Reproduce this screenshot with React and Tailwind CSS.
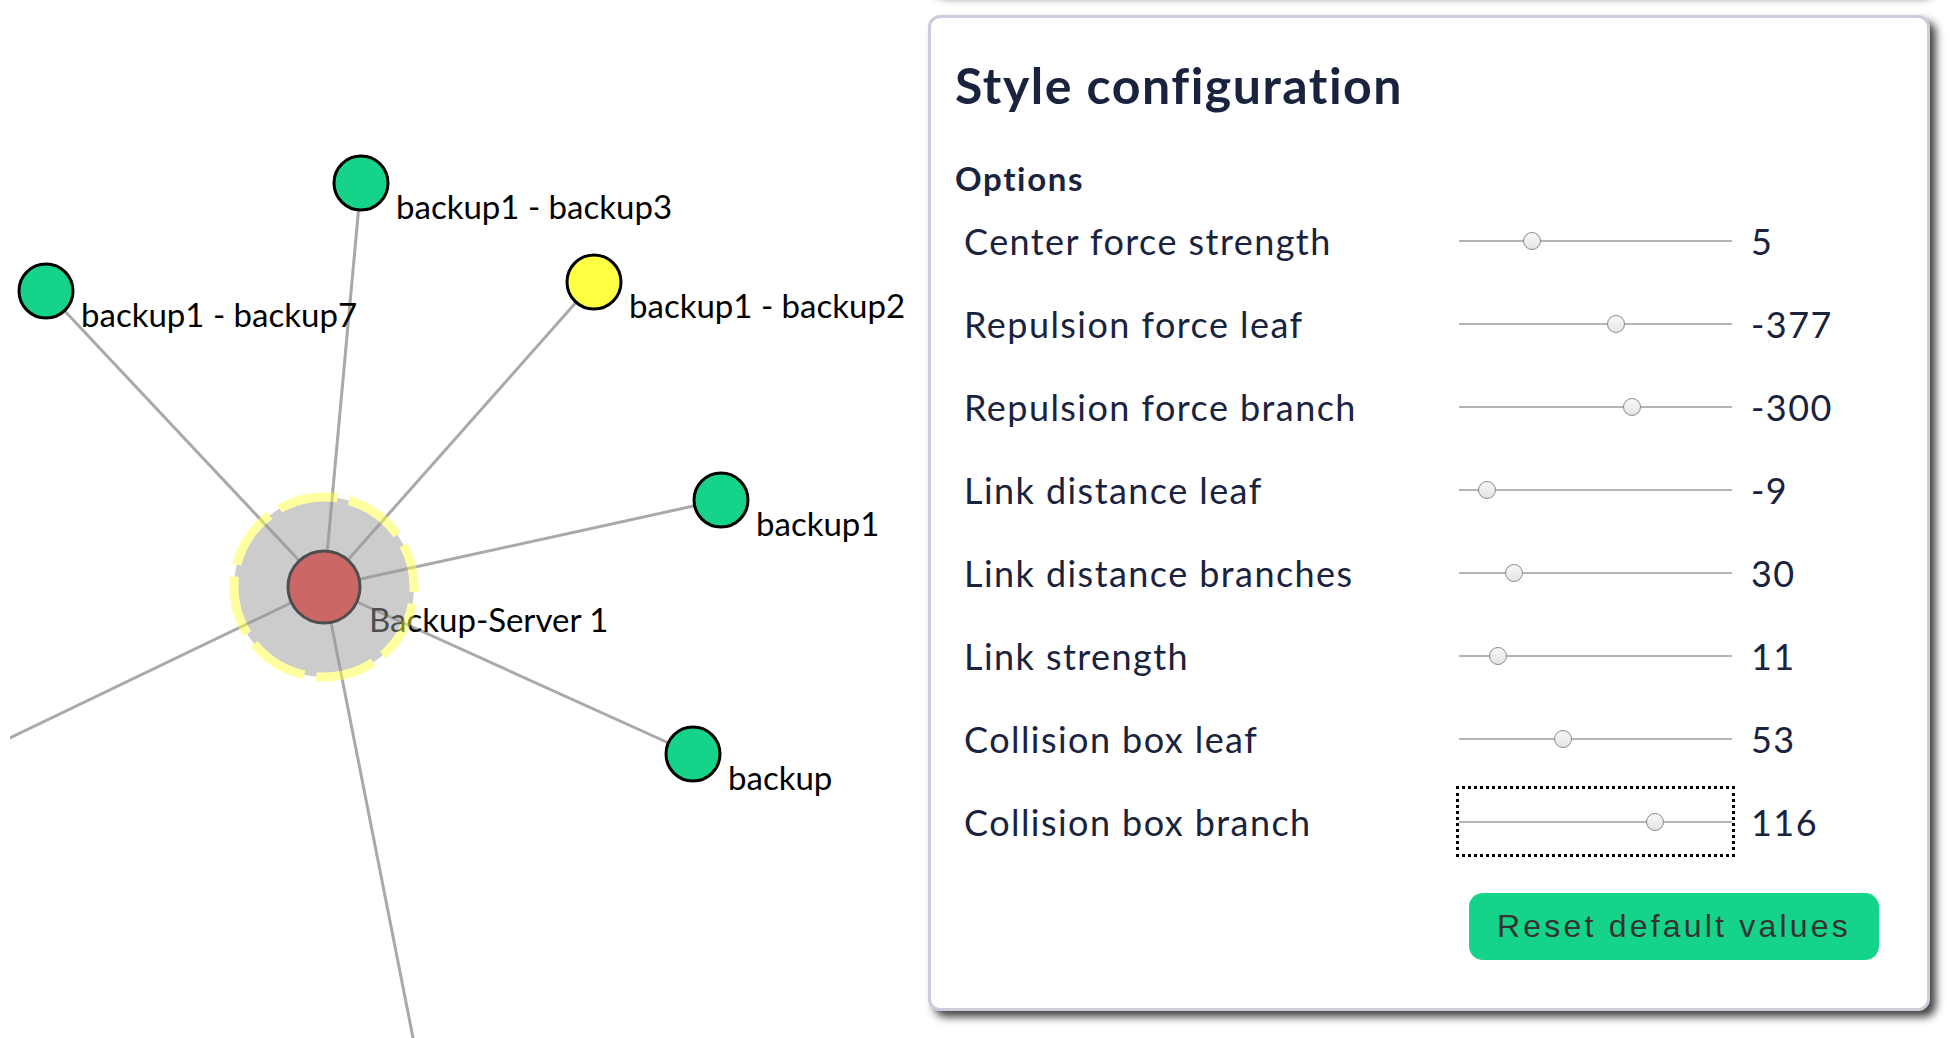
import { useState } from "react";

const HUB = { x: 314, y: 587 };

const LEAVES = [
  { x: 36, y: 291, label: "backup1 - backup7", fill: "#15d388" },
  { x: 351, y: 183, label: "backup1 - backup3", fill: "#15d388" },
  { x: 584, y: 282, label: "backup1 - backup2", fill: "#ffff44" },
  { x: 711, y: 500, label: "backup1", fill: "#15d388" },
  { x: 683, y: 754, label: "backup", fill: "#15d388" },
];

const LINK_ENDS = [...LEAVES, { x: -40, y: 757 }, { x: 422, y: 1134 }];

const OPTIONS = [
  { id: "center", label: "Center force strength", min: 0, max: 20, value: 5 },
  { id: "repulsion-leaf", label: "Repulsion force leaf", min: -1000, max: 75, value: -377 },
  { id: "repulsion-branch", label: "Repulsion force branch", min: -1000, max: 88, value: -300 },
  { id: "distance-leaf", label: "Link distance leaf", min: -50, max: 500, value: -9 },
  { id: "distance-branches", label: "Link distance branches", min: -50, max: 394, value: 30 },
  { id: "strength", label: "Link strength", min: 0, max: 93, value: 11 },
  { id: "collision-leaf", label: "Collision box leaf", min: 0, max: 142, value: 53 },
  { id: "collision-branch", label: "Collision box branch", min: 0, max: 158, value: 116, active: true },
];

const CARD =
  "rounded-[12px] border-3 border-[#cbcddd] bg-white shadow-[6px_6px_8px_#444444]";

function Graph() {
  return (
    <svg className="h-full w-full overflow-hidden" role="img" aria-label="Backup topology">
      {LINK_ENDS.map((end, i) => (
        <line key={i} x1={HUB.x} y1={HUB.y} x2={end.x} y2={end.y} stroke="#a9a9a9" strokeWidth="3" />
      ))}
      {LEAVES.map((leaf) => (
        <g key={leaf.label}>
          <circle cx={leaf.x} cy={leaf.y} r="27" fill={leaf.fill} stroke="#000" strokeWidth="3" />
          <text x={leaf.x + 35} y={leaf.y + 36} className="text-[33px]">
            {leaf.label}
          </text>
        </g>
      ))}
      <circle cx={HUB.x} cy={HUB.y} r="36" fill="#ff3333" stroke="#000" strokeWidth="3" />
      <text x={HUB.x + 45} y={HUB.y + 45} className="text-[33px]">
        Backup-Server 1
      </text>
      <g opacity="0.5">
        <circle
          cx={HUB.x}
          cy={HUB.y}
          r="90"
          fill="#9b9b9b"
          stroke="#ffff44"
          strokeWidth="9"
          strokeDasharray="60 12"
          strokeDashoffset="55"
        />
      </g>
    </svg>
  );
}

function OptionRow({ option }) {
  const [value, setValue] = useState(option.value);
  return (
    <div className="grid h-[67px] grid-cols-[minmax(0,1fr)_273px_152px] items-center gap-x-[19px] pl-[9px]">
      <label htmlFor={option.id}>{option.label}</label>
      <input
        id={option.id}
        type="range"
        min={option.min}
        max={option.max}
        value={value}
        onChange={(e) => setValue(Number(e.target.value))}
        className={`h-[65px] w-full appearance-none bg-transparent [&::-webkit-slider-runnable-track]:h-[2px] [&::-webkit-slider-runnable-track]:bg-[#b5b5b0] [&::-webkit-slider-thumb]:-mt-2 [&::-webkit-slider-thumb]:size-[18px] [&::-webkit-slider-thumb]:appearance-none [&::-webkit-slider-thumb]:rounded-full [&::-webkit-slider-thumb]:border [&::-webkit-slider-thumb]:border-[#8b8b87] [&::-webkit-slider-thumb]:bg-linear-to-b [&::-webkit-slider-thumb]:from-[#f8f8f8] [&::-webkit-slider-thumb]:to-[#e4e4e4] ${
          option.active ? "outline-3 outline-dotted outline-black" : "outline-none"
        }`}
      />
      <output htmlFor={option.id}>{value}</output>
    </div>
  );
}

export default function App() {
  return (
    <main className="grid h-screen grid-cols-[459fr_501fr] overflow-hidden bg-white pr-5 pl-[10px] font-['Lato','Carlito',sans-serif]">
      <Graph />
      <div className="flex flex-col gap-6 text-[#1a233e]">
        <div className={`-mt-[69px] h-[60px] shrink-0 ${CARD}`} />
        <section className={`px-6 pt-[37px] pb-[48px] ${CARD}`}>
          <h1 className="text-[50px] leading-[60px] font-bold tracking-[0.03em]">Style configuration</h1>
          <h2 className="mt-[43px] text-[33px] leading-[40px] font-bold tracking-wider">Options</h2>
          <div className="mt-[9px] flex flex-col gap-4 text-[36px] leading-[44px] tracking-[0.04em]">
            {OPTIONS.map((option) => (
              <OptionRow key={option.id} option={option} />
            ))}
          </div>
          <div className="mt-[38px] mr-[24px] flex justify-end">
            <button
              type="button"
              className="rounded-[14px] bg-[#15d388] px-7 py-[13px] font-['Liberation_Sans',sans-serif] text-[32px] leading-[41px] tracking-widest text-[#333333]"
            >
              Reset default values
            </button>
          </div>
        </section>
      </div>
    </main>
  );
}
